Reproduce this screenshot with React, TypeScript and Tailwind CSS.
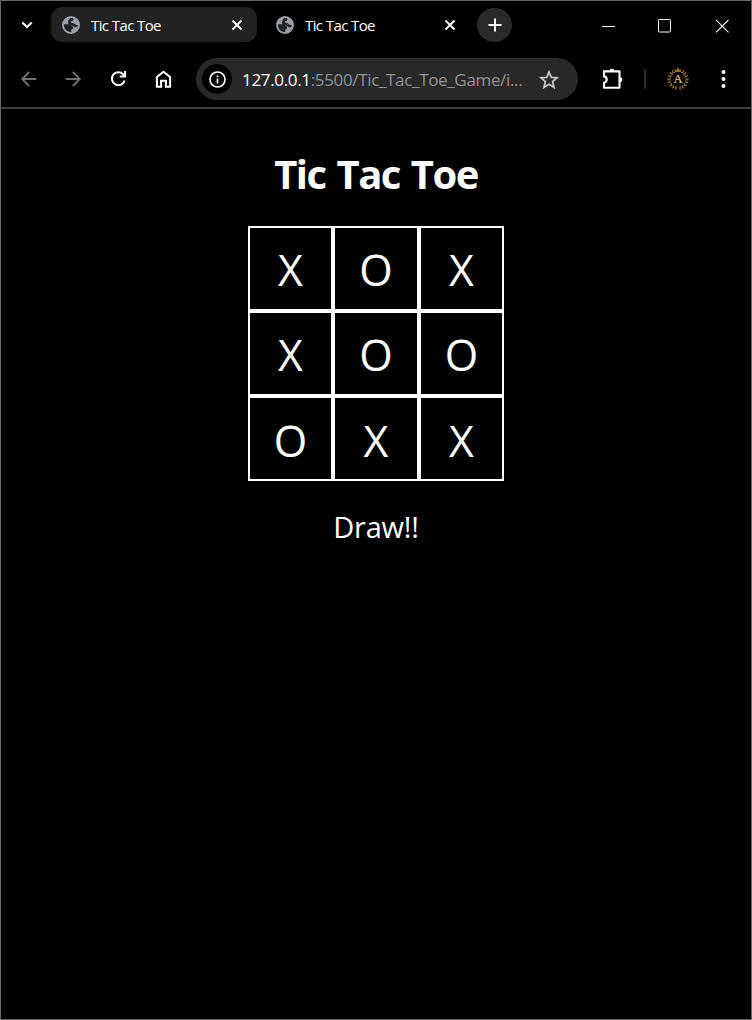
import React from 'react';

const board = ['X', 'O', 'X', 'X', 'O', 'O', 'O', 'X', 'X'];

function Globe() {
  return (
    <svg className="size-[18px] shrink-0" viewBox="0 0 18 18">
      <circle cx="9" cy="9" r="9" fill="#9aa0a6" />
      <path
        d="M1.900 8.300h4.300c2.600 0 2.700 2.200 4.800 2.200v1.300c0 1-.8 1.800-1.800 1.800v2.500C5 16.200 1.900 13 1.900 8.300zM10.200 2c.8.2 1.300.7 1.300 1.400 0 1-.8 1.400-1.800 1.600-.7.1-.8.5-.8 1 0 .8.7 1 1.700 1 2 0 2.200 2 4 2h1.300c-.2 1.600-1 2.400-2.300 2.400-1.600 0-2-1.900-3.800-1.900C7.500 9.500 6 8.300 6 6.200c0-2.500 1.700-3.200 2.500-4.200z"
        fill="#202123"
      />
    </svg>
  );
}

function Close() {
  return (
    <svg className="size-3 shrink-0" viewBox="0 0 12 12" fill="none" stroke="#fff" strokeWidth="1.9">
      <path d="M1.5 1.5l9 9M10.5 1.5l-9 9" />
    </svg>
  );
}

function Tab({ active }: { active?: boolean }) {
  return (
    <div className={active ? 'flex h-[35px] w-[206px] items-center rounded-[11px] bg-[#222222] pl-[11px] pr-[14px]' : 'flex h-[35px] w-[206px] items-center pl-[11px] pr-[15px]'}>
      <Globe />
      <span className="ml-[11px] flex-1 whitespace-nowrap pt-px text-[15px] leading-5 tracking-[-0.6px]">Tic Tac Toe</span>
      <Close />
    </div>
  );
}

function TabStrip() {
  return (
    <div className="flex h-[49px] items-start pt-[6px]">
      <div className="flex h-[35px] w-[50px] items-center pl-[20px]">
        <svg className="h-[8px] w-[12px]" viewBox="0 0 12 8" fill="none" stroke="#fff" strokeWidth="2.1">
          <path d="M1.3 1.4L6 6.1l4.7-4.7" />
        </svg>
      </div>
      <Tab active />
      <div className="ml-[8px]"><Tab /></div>
      <div className="ml-[6px] mt-px flex h-[34px] w-[35px] items-center justify-center rounded-full bg-[#292929]">
        <svg className="size-[14px]" viewBox="0 0 14 14" stroke="#fff" strokeWidth="2"><path d="M7 .5v13M.5 7h13" /></svg>
      </div>
      <div className="ml-auto flex h-[37px] items-center pr-[22px]">
        <svg className="h-[14px] w-[14px]" viewBox="0 0 14 14" stroke="#fff"><path d="M1 7.5h13" /></svg>
        <svg className="ml-[42px] h-[14px] w-[14px]" viewBox="0 0 14 14" fill="none" stroke="#fff"><rect x="1.5" y=".5" width="12" height="12.5" rx=".8" /></svg>
        <svg className="ml-[44px] h-[14px] w-[14px]" viewBox="0 0 14 14" stroke="#fff" strokeWidth="1.1"><path d="M1 .8l12.500 12.500M13.5.8L1 13.300" /></svg>
      </div>
    </div>
  );
}

function Wreath() {
  const leaves = [10, 34, 58, 82, 106, 130, 154, 174];
  return (
    <svg className="h-[24px] w-[22px] shrink-0" viewBox="0 0 22 24">
      <path d="M7.3 1.5l1.8 1.8L11 .3l1.9 3 1.8-1.8-.7 3.500H8z" fill="#8f6b2c" />
      <g fill="none" stroke="#94702f" strokeWidth="1.2">
        {leaves.map((a) => (
          <g key={a}>
            <path d="M11 21.600l-1.800-1.900M11 21.600l-1.700 1.300" transform={`rotate(${a * 0.82} 11 12.500)`} />
            <path d="M11 21.600l1.800-1.900M11 21.600l1.700 1.300" transform={`rotate(${-a * 0.82} 11 12.500)`} />
          </g>
        ))}
      </g>
      <text x="11" y="15.6" textAnchor="middle" fontFamily="Liberation Serif, serif" fontSize="12.5" fill="#e0c080" stroke="#e0c080" strokeWidth=".2">A</text>
    </svg>
  );
}

function Toolbar() {
  return (
    <div className="flex h-[59px] items-start border-b-2 border-[#3b3b3b] pt-[8px]">
      <div className="flex h-[42px] w-[195px] items-center pl-[20px]">
        <svg className="mb-px size-[16px]" viewBox="0 0 16 16" fill="none" stroke="#717171" strokeWidth="1.8"><path d="M15.3 8H2M8.1 1L1.2 8l6.9 7" /></svg>
        <svg className="mb-px ml-[28px] size-[16px]" viewBox="0 0 16 16" fill="none" stroke="#717171" strokeWidth="1.8"><path d="M.7 8H14M7.9 1l6.9 7-6.9 7" /></svg>
        <svg className="mb-[2px] ml-[29px] size-[17px]" viewBox="0 0 17 17" fill="none" stroke="#fff" strokeWidth="2"><path d="M14.6 10.5A6.5 6.5 0 1 1 13.2 4.3l1.5 1.7M15.1 1v5.4H9.7" /></svg>
        <svg className="mb-px ml-[28px] h-[18px] w-[17px]" viewBox="0 0 17 18" fill="none" stroke="#fff" strokeWidth="2"><path d="M1.9 7L8.5 1.7 15.1 7v9.8h-4.2v-6.1H6.1v6.1H1.9z" /></svg>
      </div>
      <div className="flex h-[42px] w-[382px] items-center rounded-full bg-[#282828] pl-[6px] pr-[19px]">
        <div className="flex size-[30px] shrink-0 items-center justify-center rounded-full bg-black">
          <svg className="size-[17px]" viewBox="0 0 17 17" fill="none" stroke="#fff" strokeWidth="1.7"><circle cx="8.5" cy="8.5" r="7.5" /><path d="M8.5 7.6v4.8M8.5 4.5v1.7" /></svg>
        </div>
        <div className="ml-[10px] w-[284px] whitespace-nowrap pt-px text-[17px] leading-6 tracking-[-0.34px] text-[#929292]">
          <span className="text-white">127.0.0.1</span>:5500/Tic_Tac_Toe_Game/i...
        </div>
        <svg className="ml-auto h-[19px] w-[20px] shrink-0" viewBox="0 0 20 19" fill="none" stroke="#c4c4c4" strokeWidth="1.8"><path d="M10 2l2.25 5.35 5.8.5-4.4 3.8 1.3 5.65L10 14.3l-4.95 3 1.3-5.65-4.4-3.8 5.8-.5z" /></svg>
      </div>
      <div className="flex h-[42px] flex-1 items-center pl-[24px]">
        <svg className="h-[22px] w-[22px]" viewBox="0 0 22 22" fill="none" stroke="#fff" strokeWidth="2.1" strokeLinejoin="round">
          <path d="M2 3.4h15.5v16.3H2v-5c1.900-.3 2.700-1.300 2.700-3.1S3.900 8.700 2 8.4z" />
          <path d="M7.3 3.2a2.5 2.5 0 0 1 5 0zM17.7 9a2.6 2.6 0 0 1 0 5.2z" fill="#fff" stroke="none" />
        </svg>
        <div className="ml-[20px] h-[20px] w-[2px] bg-[#2b2b2b]" />
        <div className="ml-[21px]"><Wreath /></div>
        <svg className="ml-[32px] h-[18px] w-[5px]" viewBox="0 0 5 18" fill="#fff"><circle cx="2.5" cy="2" r="2" /><circle cx="2.5" cy="9" r="2" /><circle cx="2.5" cy="16" r="2" /></svg>
      </div>
    </div>
  );
}

export default function App() {
  return (
    <div className="flex h-[1020px] w-[752px] flex-col border border-[#666666] bg-black font-['Open_Sans','Noto_Sans',sans-serif] text-white">
      <TabStrip />
      <Toolbar />
      <main className="flex flex-col items-center">
        <h1 className="mt-[37px] whitespace-nowrap text-[40px] font-bold leading-[56px] tracking-[-1.5px] [word-spacing:2px]">Tic Tac Toe</h1>
        <div className="mt-[24px] grid grid-cols-[85px_86px_85px] grid-rows-[85px_85px_85px]">
          {board.map((mark, i) => (
            <div key={i} className={i < 6 ? 'flex items-center justify-center border-2 border-white pt-[2px] text-[43px] leading-none' : 'flex items-center justify-center border-2 border-white pt-[4px] text-[43px] leading-none'}>{mark}</div>
          ))}
        </div>
        <p className="mt-[26px] text-[29px] leading-[40px] tracking-[-0.2px]">Draw!!</p>
      </main>
    </div>
  );
}
